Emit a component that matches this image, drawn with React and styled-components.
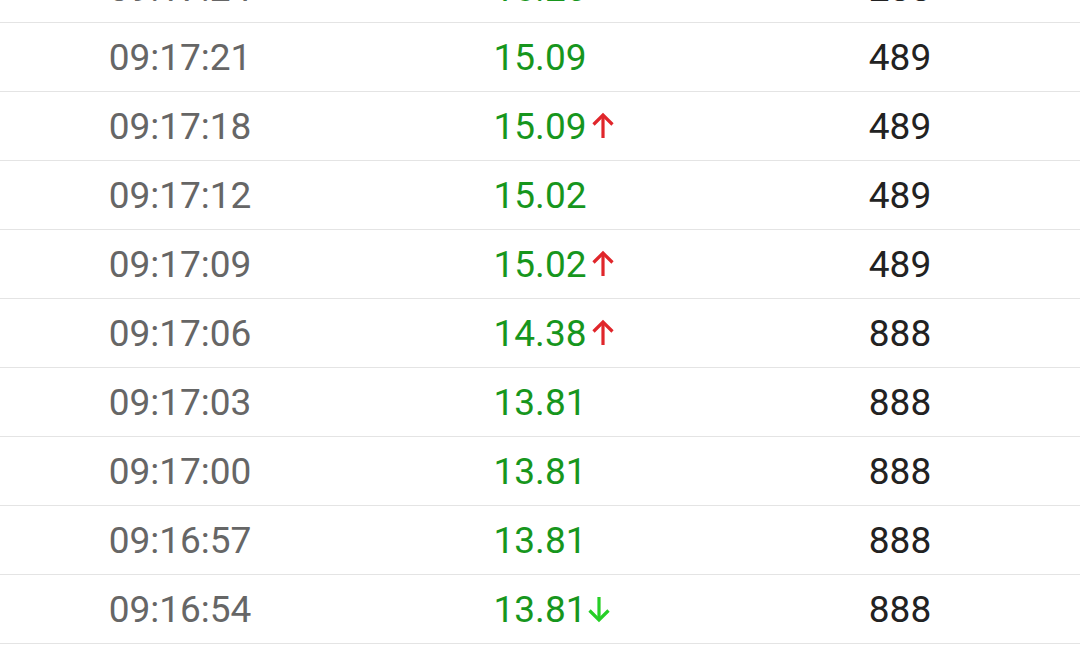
import React from "react";
import styled, { createGlobalStyle } from "styled-components";

const Global = createGlobalStyle`
  html, body { margin: 0; padding: 0; background: #ffffff; }
  body { font-family: Roboto, "Noto Sans", sans-serif; overflow: hidden; }
`;

const Page = styled.div`
  width: 1080px;
  height: 651px;
  overflow: hidden;
  background: #fff;
`;

const List = styled.div`
  margin-top: -46px;
  display: flex;
  flex-direction: column;
`;

const Row = styled.div`
  box-sizing: border-box;
  height: 69px;
  border-bottom: 1px solid #e4e4e4;
  display: grid;
  grid-template-columns: repeat(3, 1fr);
  align-items: center;
  font-size: 37px;
  line-height: 1;
`;

const Cell = styled.div`
  display: flex;
  justify-content: center;
  align-items: center;
  color: ${(p) => p.$color};
`;

const Price = styled.span`
  position: relative;
  display: inline-block;
`;

const ArrowBox = styled.span`
  position: absolute;
  top: 50%;
  left: calc(100% + ${(p) => p.$offset}px);
  transform: translateY(-50%);
  display: flex;
`;

const Arrow = ({ dir }) => {
  const up = dir === "up";
  const color = up ? "#e0262b" : "#26cf26";
  return (
    <ArrowBox $offset={up ? 5 : 1}>
      <svg width="24" height="28" viewBox="0 0 24 28" fill="none">
        {up ? (
          <>
            <path d="M12 3 V26" stroke={color} strokeWidth="3.2" />
            <path d="M2.5 12.5 L12 3 L21.5 12.5" stroke={color} strokeWidth="3.2" />
          </>
        ) : (
          <>
            <path d="M12 2 V25" stroke={color} strokeWidth="3.2" />
            <path d="M2.5 15.5 L12 25 L21.5 15.5" stroke={color} strokeWidth="3.2" />
          </>
        )}
      </svg>
    </ArrowBox>
  );
};

const rows = [
  { t: "09:17:24", p: "15.26", d: "up", v: "288" },
  { t: "09:17:21", p: "15.09", v: "489" },
  { t: "09:17:18", p: "15.09", d: "up", v: "489" },
  { t: "09:17:12", p: "15.02", v: "489" },
  { t: "09:17:09", p: "15.02", d: "up", v: "489" },
  { t: "09:17:06", p: "14.38", d: "up", v: "888" },
  { t: "09:17:03", p: "13.81", v: "888" },
  { t: "09:17:00", p: "13.81", v: "888" },
  { t: "09:16:57", p: "13.81", v: "888" },
  { t: "09:16:54", p: "13.81", d: "down", v: "888" },
];

export default function App() {
  return (
    <Page>
      <Global />
      <List>
        {rows.map((r, i) => (
          <Row key={i}>
            <Cell $color="#666666">{r.t}</Cell>
            <Cell $color="#17961d">
              <Price>
                {r.p}
                {r.d && <Arrow dir={r.d} />}
              </Price>
            </Cell>
            <Cell $color="#222222">{r.v}</Cell>
          </Row>
        ))}
      </List>
    </Page>
  );
}
